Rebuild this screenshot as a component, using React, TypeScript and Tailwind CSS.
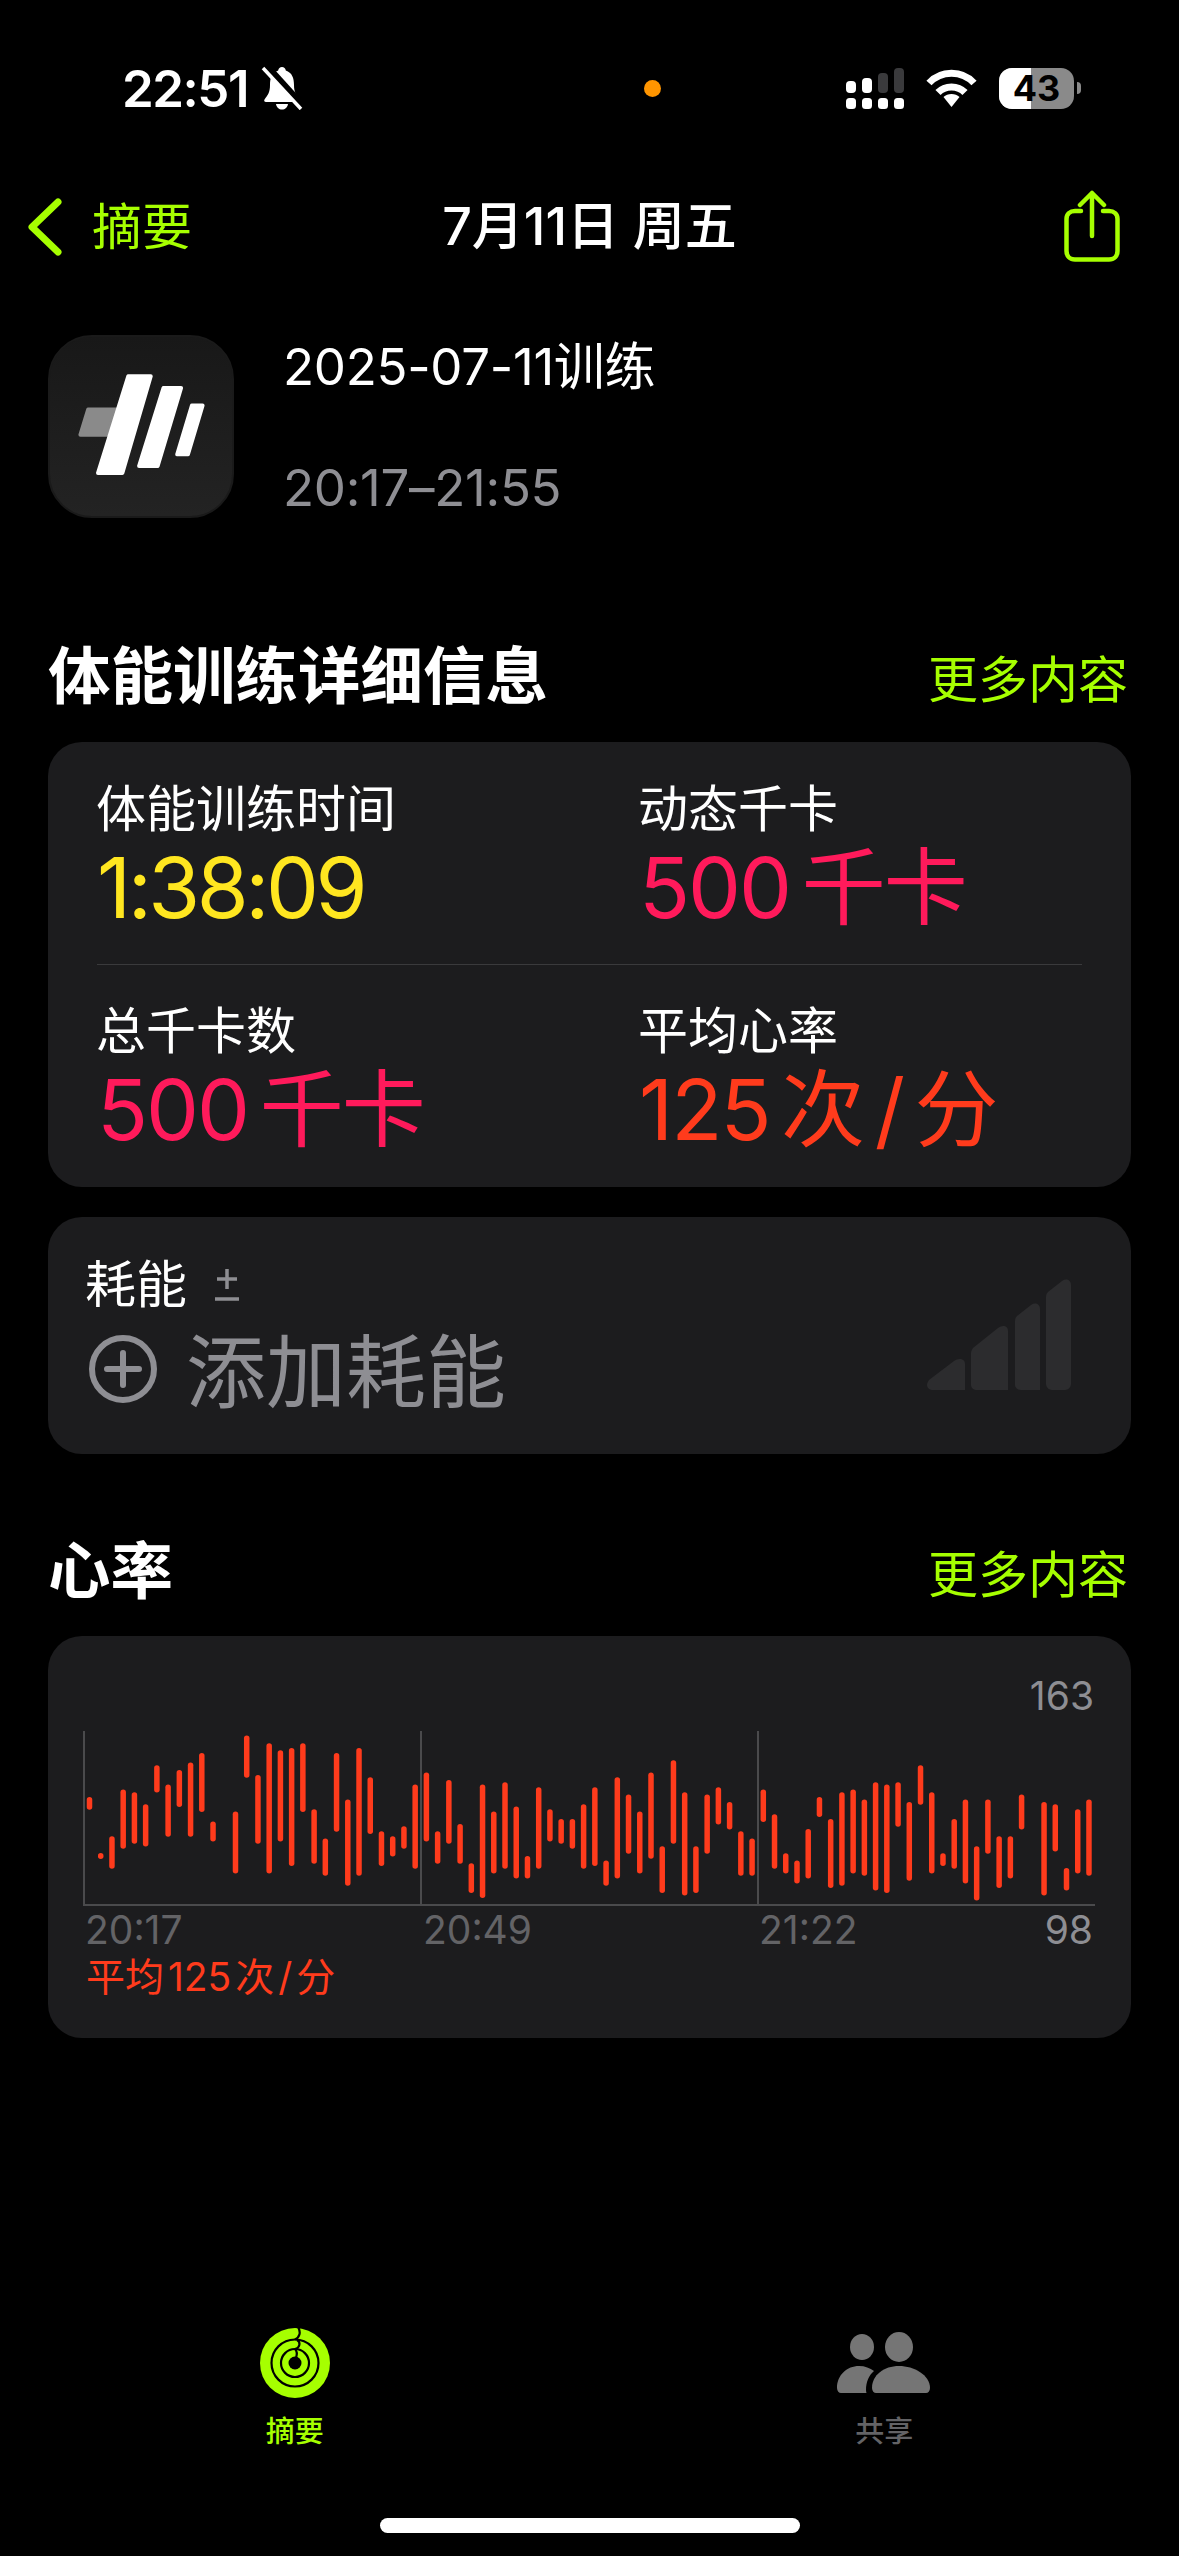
const LIME = "#A6FF00";

// [top, bottom] of each heart rate bar, in px * 3 from the chart's reference; null = no sample
const heartBars: ([number, number] | null)[] = [
  [410, 450], [578, 598], [528, 627], [388, 567], [396, 552], [432, 560], [315, 398], [373, 531],
  [329, 442], [307, 531], [278, 457], [484, 545], null, [454, 641], [226, 354], [344, 552],
  [249, 641], [270, 545], [263, 619], [249, 457], [447, 612], [535, 648], [278, 516], [418, 678],
  [263, 648], [351, 523], [513, 619], [528, 590], [498, 567], [373, 627], [337, 545], [513, 612],
  [359, 552], [491, 612], [609, 700], [373, 715], [454, 641], [366, 627], [439, 656], [587, 656],
  [381, 627], [447, 545], [476, 552], [476, 567], [432, 627], [381, 619], [601, 678], [351, 656],
  [403, 582], [454, 641], [337, 597], [558, 700], [300, 552], [396, 707], [558, 700], [403, 582],
  [381, 494], [425, 509], [513, 648], [535, 648], [388, 487], [462, 627], [579, 641], [601, 671],
  [506, 656], [410, 472], [476, 685], [396, 678], [388, 641], [418, 648], [366, 692], [373, 700],
  [366, 501], [425, 663], [315, 435], [396, 641], [579, 619], [476, 627], [418, 671], [558, 722],
  [418, 582], [528, 685], [528, 656], [403, 509], null, [425, 707], [432, 575], [623, 692],
  [447, 641], [418, 648],
];

function StatusBar() {
  return (
    <div className="flex h-[176px] items-center pl-[122px] pr-[98px] text-white">
      <div className="flex w-[522px] items-center">
        <span className="text-[51px] font-semibold leading-none tracking-[-1.5px]">22:51</span>
        <svg width="42" height="44" viewBox="0 0 42 44" className="ml-[13px]">
          <path d="M21 1c2 0 3.500 1.500 3.800 3.500C31 6.500 33 12 33 19c0 7 2 10 5.500 14.500.8 1.200 0 2.500-1.500 2.500H5c-1.500 0-2.300-1.300-1.500-2.500C7 29 9 26 9 19c0-7 2-12.500 8.200-14.500C17.500 2.500 19 1 21 1z" fill="#fff" />
          <path d="M15 38h12c-.5 3.500-3 5.500-6 5.500s-5.500-2-6-5.500z" fill="#fff" />
          <path d="M4 -1l38 42" stroke="#000" strokeWidth="8" />
          <path d="M2 2l38 41" stroke="#fff" strokeWidth="3.500" />
        </svg>
      </div>
      <div className="h-[17px] w-[17px] rounded-full bg-[#FF9500]" />
      <div className="ml-auto flex items-center">
        <svg width="58" height="41" viewBox="0 0 58 41" fill="#fff">
          <rect x="0" y="13" width="10" height="12" rx="4" />
          <rect x="16" y="10" width="10" height="15" rx="4" />
          <rect x="32" y="5" width="10" height="20" rx="4" fill="#3a3a3c" />
          <rect x="48" y="0" width="10" height="25" rx="4" fill="#3a3a3c" />
          <rect x="0" y="30" width="10" height="11" rx="3.500" />
          <rect x="16" y="30" width="10" height="11" rx="3.500" />
          <rect x="32" y="30" width="10" height="11" rx="3.500" />
          <rect x="48" y="30" width="10" height="11" rx="3.500" />
        </svg>
        <svg width="51" height="38" viewBox="0 0 51 38" className="ml-[22px]" fill="none" stroke="#fff" strokeWidth="7">
          <path d="M3 14C15 1 36 1 48 14" />
          <path d="M12 23.500C19 16 32 16 39 23.500" />
          <path d="M17.500 28c4-4 12-4 16 0l-8 10z" fill="#fff" stroke="none" />
        </svg>
        <div className="relative ml-[22px] h-[41px] w-[75px] overflow-hidden rounded-[13px] bg-[#8a8a8a]">
          <div className="h-full w-[32px] bg-white" />
          <span className="absolute inset-0 flex items-center justify-center text-[36px] font-bold leading-none text-black">43</span>
        </div>
        <div className="ml-[3px] h-[12px] w-[4px] rounded-r-full bg-[#8a8a8a]" />
      </div>
    </div>
  );
}

function NavBar() {
  return (
    <div className="grid h-[102px] grid-cols-[1fr_auto_1fr] items-center px-[28px]">
      <div className="flex items-center text-[50px] leading-none" style={{ color: LIME }}>
        <svg width="34" height="58" viewBox="0 0 34 58" fill="none" stroke={LIME} strokeWidth="7" strokeLinecap="round" strokeLinejoin="round">
          <path d="M30 4L4 29l26 25" />
        </svg>
        <span className="ml-[30px]">摘要</span>
      </div>
      <div className="text-[52px] font-medium leading-none text-white">7月11日 周五</div>
      <div className="flex justify-end pb-[2px] pr-[31px]">
        <svg width="56" height="72" viewBox="0 0 56 72" fill="none" stroke={LIME} strokeWidth="4.500" strokeLinecap="round" strokeLinejoin="round">
          <path d="M17 21H11c-5 0-8.500 3-8.500 8v32c0 5 3.500 8.500 8.500 8.500h34c5 0 8.500-3.500 8.500-8.500V29c0-5-3.500-8-8.500-8h-6" />
          <path d="M28 46V3M16 15L28 3l12 12" />
        </svg>
      </div>
    </div>
  );
}

function AppIcon() {
  return (
    <div className="h-[183px] w-[186px] shrink-0 rounded-[44px] border-2 border-[#1a1a1a] bg-gradient-to-b from-[#181818] to-[#232323]">
      <svg width="182" height="179" viewBox="0 0 186 183" fill="#fff" stroke="#fff" strokeWidth="4" strokeLinejoin="round">
        <path d="M39 74h29l-10 26H31z" fill="#8a8a8a" stroke="#8a8a8a" />
        <path d="M80 40h23L74 139H49z" />
        <path d="M116 52h18l-24 80H91z" />
        <path d="M145 70h11l-15 50h-11z" />
      </svg>
    </div>
  );
}

function SectionHeader({ title }: { title: string }) {
  return (
    <div className="flex h-[80px] items-center justify-between">
      <h2 className="pt-[3px] text-[62.5px] font-bold leading-none text-white">{title}</h2>
      <span className="mr-[3px] pt-[10px] text-[50px] leading-none" style={{ color: LIME }}>更多内容</span>
    </div>
  );
}

function Metric({ label, value, color }: { label: string; value: string; color: string }) {
  return (
    <div className="pb-[27px] pt-[37px]">
      <div className="-ml-[1px] text-[50px] leading-[61px] text-white">{label}</div>
      <div className={`-mt-[1px] whitespace-pre text-[84px] leading-[98px] tracking-[-2px] [word-spacing:-10px] ${color}`}>{value}</div>
    </div>
  );
}

function DetailsCard() {
  return (
    <div className="mt-[27px] h-[445px] rounded-[34px] bg-[#1c1c1e] px-[49px]">
      <div className="grid grid-cols-[542px_1fr]">
        <Metric label="体能训练时间" value="1:38:09" color="text-[#FFE620] !tracking-[-3.5px]" />
        <Metric label="动态千卡" value="500 千卡" color="text-[#FF1A5B]" />
      </div>
      <div className="h-px bg-[#3a3a3c]" />
      <div className="-mt-[1px] grid grid-cols-[542px_1fr]">
        <Metric label="总千卡数" value="500 千卡" color="text-[#FF1A5B]" />
        <Metric label="平均心率" value="125 次 / 分" color="text-[#FF3B1C]" />
      </div>
    </div>
  );
}

function EffortCard() {
  return (
    <div className="mt-[30px] flex h-[237px] justify-between rounded-[34px] bg-[#1c1c1e] pl-[37px] pr-[60px] pt-[36px]">
      <div>
        <div className="flex h-[61px] items-center pt-[2px] text-[51px] leading-none text-white">
          耗能
          <svg width="24" height="36" viewBox="0 0 24 36" className="ml-[28px]" stroke="#8e8e93" strokeWidth="3.500">
            <path d="M12 2v20M2 12h20M0 32h24" />
          </svg>
        </div>
        <div className="flex h-[110px] items-center">
          <svg width="70" height="70" viewBox="0 0 70 70" fill="none" stroke="#8e8e93" strokeWidth="6" className="ml-[3px]">
            <circle cx="35" cy="35" r="31" />
            <path d="M35 19v32M19 35h32" strokeLinecap="round" />
          </svg>
          <span className="ml-[28px] pt-[6px] text-[80px] leading-none text-[#8e8e93]">添加耗能</span>
        </div>
      </div>
      <svg width="144" height="111" viewBox="0 0 144 111" fill="#2c2c2e" className="mt-[26px]">
        <path d="M0 106c0-2 1-3 2-5L27 82c4-3 11-3 11 3v26H6c-3 0-6-2-6-5z" />
        <path d="M44 74c0-2 1-3 2-5L71 49c4-3 10-3 10 3v59H50c-3 0-6-2-6-5z" />
        <path d="M88 42c0-2 .5-3 2-5L104 26c4-3 9-1 9 4v81h-19c-3 0-6-2-6-5z" />
        <path d="M119 18c0-2 .5-3 2-5L135 2c4-3 9-1 9 4v99c0 3-3 6-6 6h-13c-3 0-6-3-6-6z" />
      </svg>
    </div>
  );
}

function HeartChart() {
  return (
    <svg width="1013" height="175" viewBox="0 0 1013 175" className="-ml-[3px] mt-[12px] block overflow-visible">
      <path d="M1 0v174H1012M338 0v174M675 0v174" fill="none" stroke="#4a4a4c" strokeWidth="2" />
      {heartBars.map((bar, i) =>
        bar ? (
          <line
            key={i}
            x1={6.5 + i * 11.23}
            x2={6.5 + i * 11.23}
            y1={bar[0] / 3 - 71 + 3}
            y2={Math.max(bar[1] / 3 - 71 - 3, bar[0] / 3 - 71 + 3.01)}
            stroke="#FF3B1C"
            strokeWidth="5.500"
            strokeLinecap="round"
          />
        ) : null,
      )}
    </svg>
  );
}

function HeartCard() {
  return (
    <div className="mt-[26px] h-[402px] rounded-[34px] bg-[#1c1c1e] pl-[38px] pr-[37px] pt-[37px]">
      <div className="text-right text-[39px] leading-[46px] text-[#8e8e93]">163</div>
      <HeartChart />
      <div className="mt-[1px] flex -translate-x-[1px] text-[39px] leading-[46px] text-[#636366]">
        <span className="w-[338px]">20:17</span>
        <span className="w-[336px]">20:49</span>
        <span>21:22</span>
        <span className="ml-auto text-[#8e8e93]">98</span>
      </div>
      <div className="mt-[1px] text-[39px] leading-[46px] text-[#FF3B1C] [word-spacing:-7px]">平均 125 次 / 分</div>
    </div>
  );
}

function TabBar() {
  return (
    <div className="mt-[290px] grid grid-cols-2">
      <div className="flex flex-col items-center">
        <svg width="70" height="70" viewBox="0 0 70 70" fill="none">
          <circle cx="35" cy="35" r="35" fill={LIME} />
          <g stroke="#000" strokeWidth="2.200">
            <circle cx="35" cy="35" r="23.500" />
            <circle cx="35" cy="35" r="14" />
            <path d="M38 -1C41 4 40 9 35 11.500" />
            <path d="M37 12C41 14 40 20 35 21" />
            <path d="M35 21C38 24 37 27 36 30" />
          </g>
          <circle cx="35" cy="35" r="6.500" fill="#000" />
        </svg>
        <span className="mt-[19px] text-[29px] font-medium leading-[30px]" style={{ color: LIME }}>摘要</span>
      </div>
      <div className="flex flex-col items-center">
        <svg width="94" height="62" viewBox="0 0 94 62" fill="#757575" className="mt-[4px]">
          <ellipse cx="25" cy="15" rx="12" ry="13" />
          <ellipse cx="62" cy="15" rx="14" ry="15" />
          <path d="M0 56c0-13 10-22 22-22 6 0 11 2 15 5-5 4-8 11-8 19 0 1 .2 2 .5 3H4c-2 0-4-2-4-5z" />
          <path d="M35 56c0-13 12-22 27-22s31 9 31 22c0 3-2 5-4 5H39c-2 0-4-2-4-5z" />
        </svg>
        <span className="mt-[23px] text-[29px] font-medium leading-[30px] text-[#636366]">共享</span>
      </div>
    </div>
  );
}

export default function App() {
  return (
    <div className="h-[2556px] w-[1179px] overflow-hidden bg-black font-['Inter','Noto_Sans_CJK_SC',sans-serif]">
      <StatusBar />
      <NavBar />

      <div className="px-[48px]">
        <div className="mt-[57px] flex">
          <AppIcon />
          <div className="ml-[49px] mt-[1px] flex flex-col gap-[60px] text-[51px] leading-[61px] tracking-[-0.3px]">
            <div className="text-white">2025-07-11训练</div>
            <div className="text-[#8e8e93]">20:17–21:55</div>
          </div>
        </div>

        <div className="mt-[117px]">
          <SectionHeader title="体能训练详细信息" />
        </div>
        <DetailsCard />
        <EffortCard />

        <div className="mt-[76px]">
          <SectionHeader title="心率" />
        </div>
        <HeartCard />
      </div>

      <TabBar />

      <div className="mx-auto mt-[71px] h-[15px] w-[420px] rounded-full bg-white" />
    </div>
  );
}
